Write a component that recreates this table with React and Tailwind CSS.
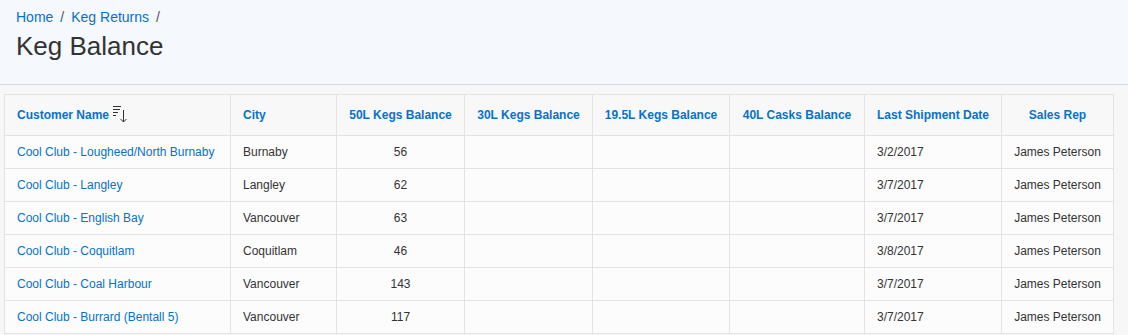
const rows = [
  { name: 'Cool Club - Lougheed/North Burnaby', city: 'Burnaby', kegs50: '56', date: '3/2/2017', rep: 'James Peterson' },
  { name: 'Cool Club - Langley', city: 'Langley', kegs50: '62', date: '3/7/2017', rep: 'James Peterson' },
  { name: 'Cool Club - English Bay', city: 'Vancouver', kegs50: '63', date: '3/7/2017', rep: 'James Peterson' },
  { name: 'Cool Club - Coquitlam', city: 'Coquitlam', kegs50: '46', date: '3/8/2017', rep: 'James Peterson' },
  { name: 'Cool Club - Coal Harbour', city: 'Vancouver', kegs50: '143', date: '3/7/2017', rep: 'James Peterson' },
  { name: 'Cool Club - Burrard (Bentall 5)', city: 'Vancouver', kegs50: '117', date: '3/7/2017', rep: 'James Peterson' },
];

const SortIcon = () => (
  <svg width="14" height="18" viewBox="0 0 14 18" className="inline-block ml-1 -mt-1 align-middle" fill="none" stroke="#333" strokeWidth="1">
    <path d="M0 1.5h8M0 4.5h7M0 7.5h5M0 10.5h3" />
    <path d="M10.5 5v12M7.5 14l3 3 3-3" />
  </svg>
);

const th = 'h-[41px] px-3 border border-[#e3e3e3] font-bold text-[#0572ce] text-[12px] whitespace-nowrap';
const td = 'h-[33px] px-3 border border-[#e3e3e3] text-[12px] whitespace-nowrap';

export default function App() {
  return (
    <div className="min-h-screen bg-[#f7f7f7] font-['Liberation_Sans',Arial,sans-serif] text-[#333]">
      <header className="h-[85px] bg-[#f5f8fc] border-b border-[#d9d9d9] px-4 pt-[7px]">
        <nav className="text-[14px] leading-[20px] text-[#0572ce] flex gap-[7px]">
          <span>Home</span>
          <span className="text-[#555]">/</span>
          <span>Keg Returns</span>
          <span className="text-[#555]">/</span>
        </nav>
        <h1 className="text-[26px] leading-[36px] mt-[1px] text-[#333]">Keg Balance</h1>
      </header>
      <div className="pl-1 pt-[9px]">
        <table className="table-fixed border-collapse w-[1109px]">
          <colgroup>
            <col className="w-[226px]" />
            <col className="w-[106px]" />
            <col className="w-[128px]" />
            <col className="w-[128px]" />
            <col className="w-[137px]" />
            <col className="w-[135px]" />
            <col className="w-[137px]" />
            <col className="w-[112px]" />
          </colgroup>
          <thead className="bg-[#f8f8f8]">
            <tr>
              <th className={`${th} text-left`}>Customer Name<SortIcon /></th>
              <th className={`${th} text-left`}>City</th>
              <th className={`${th} text-center`}>50L Kegs Balance</th>
              <th className={`${th} text-center`}>30L Kegs Balance</th>
              <th className={`${th} text-center !px-1`}>19.5L Kegs Balance</th>
              <th className={`${th} text-center`}>40L Casks Balance</th>
              <th className={`${th} text-left`}>Last Shipment Date</th>
              <th className={`${th} text-center`}>Sales Rep</th>
            </tr>
          </thead>
          <tbody className="bg-[#fcfcfc]">
            {rows.map((r) => (
              <tr key={r.name}>
                <td className={`${td} text-[#0572ce]`}>{r.name}</td>
                <td className={td}>{r.city}</td>
                <td className={`${td} text-center`}>{r.kegs50}</td>
                <td className={td}></td>
                <td className={td}></td>
                <td className={td}></td>
                <td className={td}>{r.date}</td>
                <td className={`${td} text-center`}>{r.rep}</td>
              </tr>
            ))}
          </tbody>
        </table>
      </div>
    </div>
  );
}
